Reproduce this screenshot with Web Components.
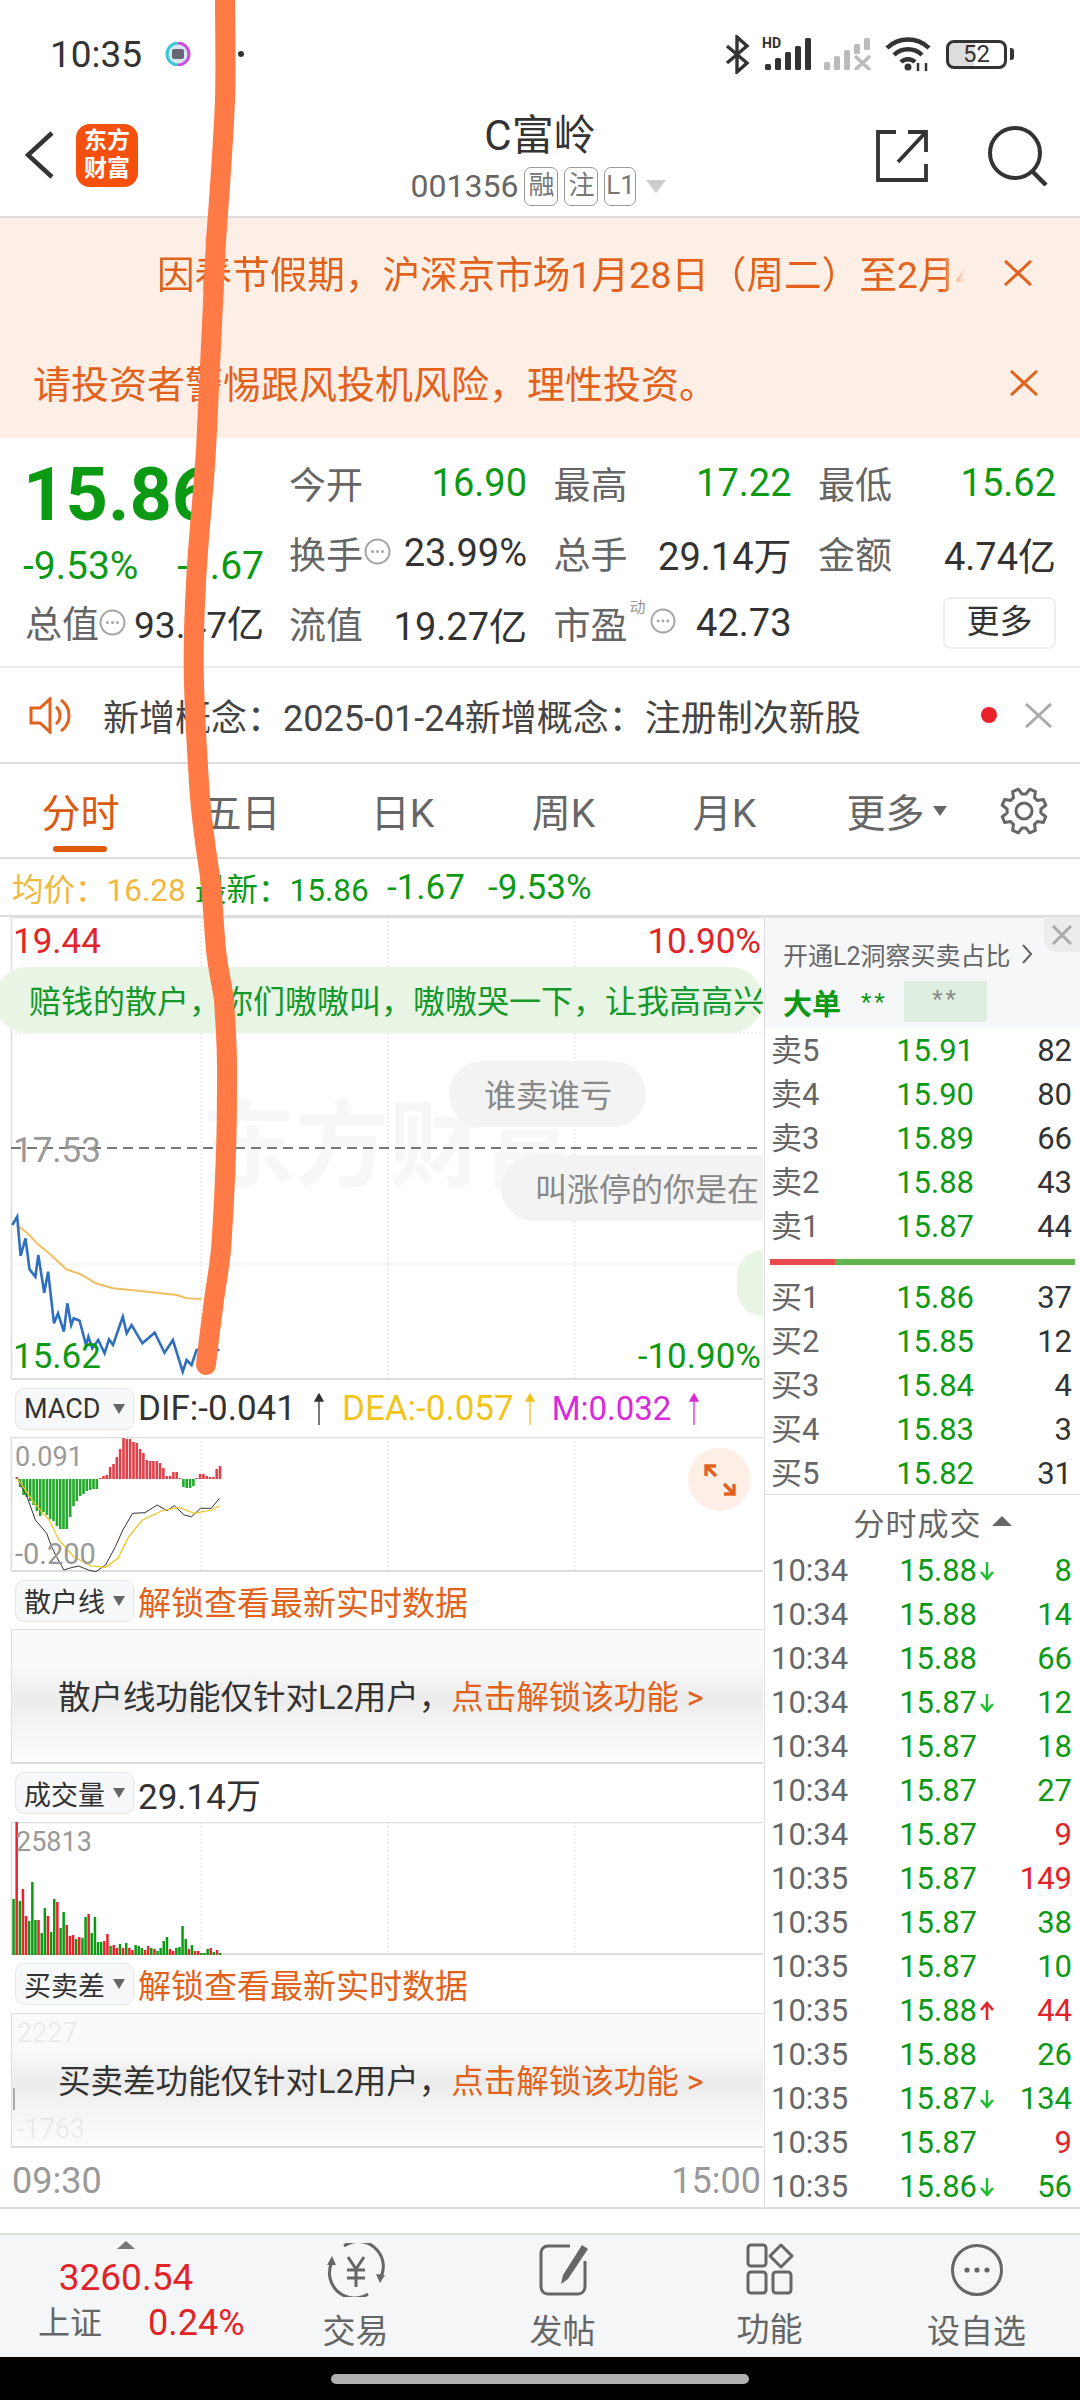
<!DOCTYPE html>
<html lang="zh"><head><meta charset="utf-8">
<style>
html,body{margin:0;padding:0;background:#fff}
body{width:1080px;height:2400px;overflow:hidden;position:relative;font-family:Roboto,"Noto Sans CJK SC",sans-serif;color:#333}
.page{display:flex;flex-direction:column;width:1080px;height:2400px}
.main{display:flex;height:1292px;border-bottom:2px solid #ddd;box-sizing:border-box}
.left{width:764px;display:flex;flex-direction:column;flex:none}
.gap{height:24px;flex:none}
.dif{color:#333;font-size:35px}.dea{color:#f0c419;font-size:35px}.m{color:#d92bd9;font-size:33px}.unlock{color:#e2621b}.plain{color:#333;font-size:35px}
x-up{margin-left:18px;margin-right:18px}
</style></head><body>
<div class="page">
<x-status></x-status>
<x-stockhead></x-stockhead>
<x-notice style="--indent:157px;--pad:48px;--end:966px;font-size:37.6px" fade>因春节假期，沪深京市场1月28日（周二）至2月4</x-notice>
<x-notice style="--indent:33px;--pad:42px;--end:1000px">请投资者警惕跟风投机风险，理性投资。</x-notice>
<x-quote></x-quote>
<x-news></x-news>
<x-tabs></x-tabs>
<x-infoline></x-infoline>
<div class="main">
 <div class="left">
  <x-pricechart></x-pricechart>
  <x-head label="MACD" h="57"><span class="dif">DIF:-0.041</span><x-up style="color:#333"></x-up><span class="dea">DEA:-0.057</span><x-up style="color:#f0c419;margin-left:11px;margin-right:17px"></x-up><span class="m">M:0.032</span><x-up style="color:#d92bd9;margin-right:0"></x-up></x-head>
  <x-macd></x-macd>
  <x-head label="散户线" h="57"><span class="unlock">解锁查看最新实时数据</span></x-head>
  <x-locked name="散户线"></x-locked>
  <x-head label="成交量" h="58"><span class="plain">29.14万</span></x-head>
  <x-volume></x-volume>
  <x-head label="买卖差" h="58"><span class="unlock">解锁查看最新实时数据</span></x-head>
  <x-locked name="买卖差" ghost></x-locked>
  <x-timeaxis></x-timeaxis>
 </div>
 <x-book></x-book>
</div>
<div class="gap"></div>
<x-nav></x-nav>
<x-gesture></x-gesture>
</div>
<x-stroke></x-stroke>
<script>
const mk=(name,css,html)=>customElements.define(name,class extends HTMLElement{
  connectedCallback(){ if(this.shadowRoot) return; const s=this.attachShadow({mode:'open'});
    s.innerHTML='<style>'+css+'</style>'+(typeof html==='function'?html(this):html);}
});
const GREEN='#0c9a14',RED='#e02428',GRAY='#666';
const infoIcon=(s=27)=>`<svg width="${s}" height="${s}" viewBox="0 0 27 27" style="flex:none"><circle cx="13.5" cy="13.5" r="12" fill="none" stroke="#a5a5a5" stroke-width="2"/><g fill="#a5a5a5"><circle cx="8.5" cy="13.5" r="1.5"/><circle cx="13.5" cy="13.5" r="1.5"/><circle cx="18.5" cy="13.5" r="1.5"/></g></svg>`;
const cross=(w,h,c,sw=3)=>`<svg width="${w}" height="${h}" viewBox="0 0 ${w} ${h}" style="flex:none"><path d="M1 1L${w-1} ${h-1}M${w-1} 1L1 ${h-1}" fill="none" stroke="${c}" stroke-width="${sw}"/></svg>`;

mk('x-status',`:host{display:flex;align-items:center;height:96px;padding:12px 66px 0 50px;box-sizing:border-box;flex:none;color:#333}
.t{font-size:37px;line-height:1;width:115px}.r{margin-left:auto;display:flex;align-items:center}
.hd{position:relative;width:50px;height:32px}.hd b{position:absolute;left:0;top:-2px;font-size:14px;line-height:14px;font-weight:700;color:#333}
.bat{width:61px;height:29px;border:3px solid #333;border-radius:8px;box-sizing:border-box;position:relative;font-size:24px;line-height:23px;text-align:center;background:linear-gradient(90deg,#ddd 45%,#fff 45%)}
.cap{width:4px;height:12px;background:#333;border-radius:0 3px 3px 0;margin-left:3px}`,
`<span class="t">10:35</span>
<svg width="26" height="24" viewBox="0 0 26 24"><circle cx="13" cy="12" r="11" fill="#d8e8f0"/><path d="M13 1a11 11 0 0 0 0 22" fill="none" stroke="#37c8d8" stroke-width="3"/><path d="M13 1a11 11 0 0 1 0 22" fill="none" stroke="#d04ce0" stroke-width="3"/><rect x="7" y="7" width="12" height="10" rx="2" fill="#667"/></svg>
<svg width="6" height="6" viewBox="0 0 6 6" style="margin-left:47px"><circle cx="3" cy="3" r="3" fill="#333"/></svg>
<div class="r">
<svg width="25" height="39" viewBox="0 0 25 39"><path d="M2 11L22 28L12 37V2L22 11L2 28" fill="none" stroke="#333" stroke-width="3.4"/></svg>
<div class="hd" style="margin-left:12px"><b>HD</b><svg width="50" height="32" viewBox="0 0 50 32" style="position:absolute;left:0;top:0"><g fill="#333"><rect x="3" y="26" width="6" height="6" rx="1.5"/><rect x="13" y="20" width="6" height="12" rx="1.5"/><rect x="23" y="14" width="6" height="18" rx="1.5"/><rect x="33" y="8" width="6" height="24" rx="1.5"/><rect x="43" y="0" width="6" height="32" rx="1.5"/></g></svg></div>
<svg width="48" height="32" viewBox="0 0 48 32" style="margin-left:12px"><g fill="#bbb"><rect x="0" y="24" width="6" height="8" rx="1.5"/><rect x="10" y="18" width="6" height="14" rx="1.5"/><rect x="20" y="12" width="6" height="20" rx="1.5"/><rect x="30" y="6" width="6" height="10" rx="1.5"/><rect x="40" y="0" width="6" height="12" rx="1.5"/></g><path d="M31 18L46 32M46 18L31 32" stroke="#bbb" stroke-width="3.5"/></svg>
<svg width="46" height="34" viewBox="0 0 46 34" style="margin-left:13px"><g fill="none" stroke="#333" stroke-width="4.5"><path d="M2 11a30 30 0 0 1 42 0"/><path d="M9 18a20 20 0 0 1 28 0"/><path d="M16 25a10 10 0 0 1 14 0"/></g><circle cx="23" cy="30" r="3.5" fill="#333"/><path d="M33 34v-8M41 26v8" stroke="#333" stroke-width="2.5"/></svg>
<div class="bat" style="margin-left:15px">52</div><div class="cap"></div>
</div>`);

mk('x-stockhead',`:host{display:grid;grid-template-columns:1fr auto 1fr;height:122px;box-sizing:border-box;border-bottom:2px solid #ddd;flex:none;background:#fff}
.l{display:flex;align-items:center;padding-left:25px;gap:22px;padding-bottom:2px}.logo{width:62px;height:63px;border-radius:14px;background:#f5500e;color:#fff;font-weight:700;font-size:23px;line-height:28px;text-align:center;padding-top:3px;box-sizing:border-box}
.c{display:flex;flex-direction:column;align-items:center}.name{font-size:42px;line-height:50px;margin-top:15px;color:#333}
.code{display:flex;align-items:center;font-size:32px;line-height:40px;color:#666;margin-top:5px;margin-left:-3px}
.bd{height:39px;border:1.5px solid #999;border-radius:7px;box-sizing:border-box;font-size:26px;line-height:35px;text-align:center;color:#777;margin-left:6px;width:34px}
.tri{width:0;height:0;border:10px solid transparent;border-top:13px solid #ccc;border-bottom:0;margin-left:10px}
.r{display:flex;align-items:center;justify-content:flex-end;padding-right:32px;gap:58px}`,
`<div class="l"><svg width="29" height="48" viewBox="0 0 29 48"><path d="M27 2L3 24L27 46" fill="none" stroke="#333" stroke-width="4.5"/></svg><div class="logo">东方<br>财富</div></div>
<div class="c"><div class="name">C富岭</div><div class="code">001356<span class="bd" style="margin-left:6px">融</span><span class="bd">注</span><span class="bd" style="width:32px">L1</span><span class="tri"></span></div></div>
<div class="r"><svg width="52" height="52" viewBox="0 0 52 52"><path d="M20 2H2V50H50V34M50 22V2H32M50 2L22 32" fill="none" stroke="#333" stroke-width="3.8"/></svg>
<svg width="62" height="60" viewBox="0 0 62 60"><circle cx="29" cy="27" r="25" fill="none" stroke="#333" stroke-width="4"/><path d="M46 45L60 59" stroke="#333" stroke-width="4.5"/></svg></div>`);

mk('x-notice',`:host{display:flex;align-items:center;height:110px;background:#fdeee6;flex:none;position:relative;padding-left:var(--indent);padding-right:var(--pad);box-sizing:border-box;color:#e2621b;font-size:38px}
.w{width:calc(var(--end) - var(--indent));overflow:hidden;white-space:nowrap;line-height:50px;padding-top:3px}
:host([fade]) .w{-webkit-mask-image:linear-gradient(90deg,#000 97%,transparent);mask-image:linear-gradient(90deg,#000 97%,transparent)}
svg{margin-left:auto}`,()=>`<div class="w"><slot></slot></div>${cross(28,26,'#e2621b',3)}`);

mk('x-quote',`:host{display:flex;height:230px;box-sizing:border-box;border-bottom:2px solid #ececec;padding:10px 24px 0 23px;flex:none;background:#fff}
.lf{width:241px;margin-right:25px;flex:none}.big{height:94px;font-size:74px;font-weight:700;line-height:94px;color:${GREEN}}
.chg{height:46px;display:flex;justify-content:space-between;color:${GREEN};font-size:39px;line-height:48px}
.tot{height:68px;display:flex;align-items:center;color:${GRAY};font-size:37px;padding-left:2px}.tot b{margin-left:auto;font-weight:400;color:#333;font-size:37px}
.g{display:grid;grid-template-columns:238px 238px 238px;column-gap:26.5px;grid-auto-rows:70px;flex:none}
.c{display:flex;align-items:center;font-size:37px;color:${GRAY};white-space:nowrap;position:relative}.c b{font-weight:400;margin-left:auto;font-size:38px;color:#333}.c b.gr{color:${GREEN}}
.c svg{margin-left:1px;margin-top:-4px}.sup{font-size:16px;position:absolute;left:76px;top:6px;color:#999}
.more{margin-left:auto;width:113px;height:52px;border:2px solid #eee;border-radius:7px;box-sizing:border-box;font-size:33px;line-height:46px;text-align:center;color:#333}`,
`<div class="lf"><div class="big">15.86</div><div class="chg"><span>-9.53%</span><span>-1.67</span></div><div class="tot">总值${infoIcon()}<b>93.47亿</b></div></div>
<div class="g">
<div class="c">今开<b class="gr">16.90</b></div><div class="c">最高<b class="gr">17.22</b></div><div class="c">最低<b class="gr">15.62</b></div>
<div class="c">换手${infoIcon()}<b>23.99%</b></div><div class="c">总手<b>29.14万</b></div><div class="c">金额<b>4.74亿</b></div>
<div class="c">流值<b>19.27亿</b></div><div class="c">市盈<span class="sup">动</span><span style="width:21px"></span>${infoIcon(26)}<b>42.73</b></div><div class="c"><span class="more">更多</span></div>
</div>`);

mk('x-news',`:host{display:flex;align-items:center;height:96px;box-sizing:border-box;border-bottom:2px solid #ddd;padding:0 28px 0 29px;flex:none;color:#444;font-size:36px}
span{margin-left:29px;white-space:nowrap}.d{width:16px;height:16px;border-radius:50%;background:#e8202a;margin-left:auto}`,
`<svg width="45" height="37" viewBox="0 0 45 37" style="flex:none"><g fill="none" stroke="#e2621b" stroke-width="3"><path d="M2 11H11L21 2V35L11 26H2Z"/><path d="M27 10a11 11 0 0 1 0 17"/><path d="M32 3a19 19 0 0 1 0 31"/></g></svg>
<span>新增概念：2025-01-24新增概念：注册制次新股</span><i class="d"></i><div style="margin-left:28px;display:flex">${cross(27,25,'#aaa',3)}</div>`);

mk('x-tabs',`:host{display:flex;height:95px;box-sizing:border-box;border-bottom:2px solid #ddd;flex:none;font-size:39px;color:${GRAY}}
.t{width:161px;display:flex;align-items:center;justify-content:center;position:relative;padding-bottom:2px;box-sizing:border-box}
.a{color:#d9590f}.a::after{content:"";position:absolute;left:53px;width:54px;height:6px;bottom:5px;border-radius:3px;background:#e05a0c}
.tri{position:absolute;left:128px;top:42px;border:7px solid transparent;border-top:10px solid #666;border-bottom:0}
svg{margin-left:34px;margin-top:23px;flex:none}`,
()=>{let p='';for(let i=0;i<8;i++){const a=i*Math.PI/4-Math.PI/8,d=Math.PI/8;
 const P=(r,t)=>(24+r*Math.cos(t)).toFixed(1)+' '+(24+r*Math.sin(t)).toFixed(1);
 p+=(i?'L':'M')+P(17,a-d*.7)+'L'+P(22.5,a-d*.35)+'L'+P(22.5,a+d*.35)+'L'+P(17,a+d*.7);}
 return `<div class="t a">分时</div><div class="t">五日</div><div class="t">日K</div><div class="t">周K</div><div class="t">月K</div><div class="t">更多<i class="tri"></i></div>
 <svg width="48" height="48" viewBox="0 0 48 48"><path d="${p}Z" fill="none" stroke="#666" stroke-width="3" stroke-linejoin="round"/><circle cx="24" cy="24" r="8" fill="none" stroke="#666" stroke-width="3"/></svg>`;});

mk('x-infoline',`:host{display:flex;align-items:center;height:58px;box-sizing:border-box;border-bottom:2px solid #ddd;padding-left:12px;flex:none;font-size:31.5px;color:${GREEN};white-space:nowrap}
.y{color:#f0b840;width:183px}.n{width:192px}.a{width:101px;font-size:35px}.b{font-size:35px}`,
`<span class="y">均价：16.28</span><span class="n">最新：15.86</span><span class="a">-1.67</span><span class="b">-9.53%</span>`);

/* chart helpers, all coordinates read from the reference */
const grid=(top,bot,extra='')=>`<g stroke="#ddd" stroke-width="1" stroke-dasharray="2 2">${[201,388,575].map(x=>`<line x1="${x}" x2="${x}" y1="${top}" y2="${bot}"/>`).join('')}${extra}</g>
<line x1="11.5" x2="11.5" y1="${top}" y2="${bot}" stroke="#ddd" stroke-width="1.5"/><line x1="11" x2="763" y1="${top+.5}" y2="${top+.5}" stroke="#ddd" stroke-width="1.5"/><line x1="11" x2="763" y1="${bot-1}" y2="${bot-1}" stroke="#ddd" stroke-width="2"/>`;
const zp=(a,oy)=>a.map(([x,y])=>(x/2.036).toFixed(1)+','+(y/3+oy).toFixed(1)).join(' ');

mk('x-pricechart',`:host{display:block;height:463px;position:relative;overflow:hidden;flex:none}
svg{position:absolute;left:0;top:0}
.l{position:absolute;font-size:35px;line-height:40px;white-space:nowrap}
.bub{position:absolute;height:66px;border-radius:33px;font-size:32px;line-height:70px;white-space:nowrap;overflow:hidden;box-sizing:border-box}
.wm{position:absolute;left:201px;top:180px;font-size:94px;line-height:100px;font-weight:700;color:#f7f7f7;white-space:nowrap}`,
()=>{const blue=[[25,975],[35,950],[42,1068],[52,1015],[60,1108],[72,1130],[78,1065],[90,1178],[98,1115],[110,1270],[118,1240],[130,1295],[137,1210],[145,1275],[150,1255],[162,1262],[175,1335],[180,1310],[188,1345],[200,1320],[213,1360],[222,1318],[230,1335],[250,1250],[258,1300],[268,1275],[290,1330],[315,1298],[335,1358],[352,1320],[372,1415],[380,1380],[390,1395],[400,1350],[447,1350]];
const yel=[[35,975],[60,1005],[75,1030],[100,1060],[135,1108],[165,1123],[195,1150],[230,1165],[300,1175],[360,1185],[380,1195],[410,1197]];
return `<div class="wm">东方财富</div>
<svg width="764" height="463" viewBox="0 917 764 463">${grid(917,1380,'<line x1="11" x2="763" y1="1033" y2="1033"/><line x1="11" x2="763" y1="1264" y2="1264"/>')}
<line x1="11" x2="763" y1="1148" y2="1148" stroke="#777" stroke-width="2" stroke-dasharray="10 6"/>
<polyline points="${zp(yel,900)}" fill="none" stroke="#f0c060" stroke-width="2"/><polyline points="${zp(blue,900)}" fill="none" stroke="#2f6fbd" stroke-width="2.6"/></svg>
<div class="l" style="left:13px;top:5px;color:${RED}">19.44</div><div class="l" style="right:3px;top:5px;color:${RED}">10.90%</div>
<div class="l" style="left:13px;top:214px;color:#999">17.53</div>
<div class="l" style="left:13px;top:420px;color:${GREEN}">15.62</div><div class="l" style="right:3px;top:420px;color:${GREEN}">-10.90%</div>
<div class="bub" style="left:-6px;width:769px;top:50px;background:#e8f5e5;color:#14982a;padding-left:35px">赔钱的散户，你们嗷嗷叫，嗷嗷哭一下，让我高高兴</div>
<div class="bub" style="left:449px;width:197px;top:144px;background:#f3f3f3;color:#888;padding-left:35px">谁卖谁亏</div>
<div class="bub" style="left:501px;width:262px;top:238px;background:#f3f3f3;color:#888;padding-left:34px;border-radius:33px 0 0 33px">叫涨停的你是在</div>
<div class="bub" style="left:737px;width:26px;top:333px;background:#e8f5e5;border-radius:33px 0 0 33px"></div>`;});

mk('x-up',`:host{display:inline-flex;align-items:center}`,`<svg width="10" height="32" viewBox="0 0 10 32"><path d="M5 32V1M1 8L5 1L9 8Z" fill="currentColor" stroke="currentColor" stroke-width="1.3"/></svg>`);

mk('x-head',`:host{display:flex;align-items:center;padding-left:15px;box-sizing:border-box;flex:none;font-size:33px;white-space:nowrap}
.b{width:119px;height:42px;box-sizing:border-box;border:1.5px solid #e6e6e6;border-radius:9px;background:#f7f8fa;display:flex;align-items:center;padding-left:8px;font-size:27px;margin-right:4px;color:#333;position:relative;flex:none}
.b::after{content:"";position:absolute;left:97px;top:15px;border:6.5px solid transparent;border-top:10px solid #666;border-bottom:0}`,
h=>{h.style.height=h.getAttribute('h')+'px';return `<div class="b">${h.getAttribute('label')}</div><slot></slot>`;});

mk('x-macd',`:host{display:block;height:135px;position:relative;overflow:hidden;flex:none}svg{position:absolute;left:0;top:0}
.l{position:absolute;left:15px;font-size:27px;line-height:32px;color:#999}
.e{position:absolute;left:688px;top:11px;width:63px;height:63px;border-radius:50%;background:#fdeee6;display:flex;align-items:center;justify-content:center}`,
()=>{const v=[2,-8,-16,-18,-22,-26,-32,-37,-33,-36,-40,-42,-47,-50,-50,-50,-38,-27,-22,-17,-15,-12,-11,-10,-10,1,3,4,12,15,22,30,41,40,40,37,36,30,26,19,18,18,18,16,11,3,3,7,7,1,-8,-9,-9,-7,1,5,5,3,2,2,10,13];
let r='';v.forEach((h,i)=>{const x=(15.6+3.33*i).toFixed(1);r+=`<rect x="${x}" width="2.6" y="${h>0?1479-h:1479}" height="${Math.abs(h)}" fill="${h>0?'#e0404a':'#22a82a'}"/>`;});
const dif=[[35,295],[55,350],[72,420],[95,460],[105,500],[115,530],[130,570],[145,563],[160,558],[180,570],[195,575],[215,555],[235,500],[250,450],[270,400],[295,398],[320,375],[340,392],[355,377],[375,405],[390,410],[408,385],[430,385],[447,355]];
const dea=[[35,295],[70,370],[100,420],[120,480],[150,530],[185,558],[215,562],[240,535],[262,470],[290,420],[330,392],[365,382],[395,400],[430,390],[447,378]];
return `<svg width="764" height="135" viewBox="0 1437 764 135">${grid(1437,1572)}${r}<polyline points="${zp(dif,1380)}" fill="none" stroke="#333" stroke-width="1"/><polyline points="${zp(dea,1380)}" fill="none" stroke="#f0c419" stroke-width="1.2"/></svg>
<div class="l" style="top:4px">0.091</div><div class="l" style="top:101px;font-size:29px">-0.200</div>
<div class="e"><svg style="position:static" width="32" height="32" viewBox="0 0 32 32"><path d="M2 12V2H12M2 2L12 12M30 20V30H20M30 30L20 20" fill="none" stroke="#e2621b" stroke-width="3.4"/></svg></div>`;});

mk('x-locked',`:host{display:block;height:135px;position:relative;box-sizing:border-box;flex:none;margin-left:11px;width:752px;border:solid #ddd;border-width:1.5px 0 2px 1.5px;overflow:hidden;background:linear-gradient(#fafafa 0,#f9f9f9 28%,#ececec 52%,#f3f3f3 68%,#fcfcfc 100%)}
.t{position:absolute;left:46px;top:50px;font-size:32.5px;line-height:36px;color:#333;white-space:nowrap}.t b{font-weight:400;color:#e2621b}
.g{position:absolute;left:5px;font-size:27px;line-height:30px;color:#999;opacity:.14}.k{position:absolute;left:1px;top:74px;width:2px;height:22px;background:#aaa}`,
h=>`${h.hasAttribute('ghost')?'<div class="g" style="top:4px">2227</div><div class="g" style="top:100px">-1763</div><i class="k"></i>':''}<div class="t">${h.getAttribute('name')}功能仅针对L2用户，<b>点击解锁该功能 &gt;</b></div>`);

mk('x-volume',`:host{display:block;height:133px;position:relative;flex:none;overflow:hidden}svg{position:absolute;left:0;top:0}
.l{position:absolute;left:16px;top:4px;font-size:27px;line-height:32px;color:#999}`,
()=>{const d='g56 r133 g54 r66 r39 g34 g73 g35 r35 g22 g47 r39 g23 g56 r53 g27 g43 r30 r19 r20 g16 r18 g17 g38 r41 g22 g38 g13 g13 r14 r21 g9 r10 r7 g11 r7 g12 r7 r5 g10 g9 g7 r5 r9 g7 r6 g4 g7 g14 g18 r6 r4 g7 g8 g29 g16 r6 g10 r4 r4 g2 g2 g6 r7 g3 r5 g2'.split(' ');
let r='';d.forEach((s,i)=>{const h=+s.slice(1),x=(12.3+3.13*i).toFixed(1);r+=`<rect x="${x}" width="2.5" y="${1955-h}" height="${h}" fill="${s[0]=='r'?'#e8222c':'#0c9a14'}"/>`;});
return `<svg width="764" height="133" viewBox="0 1822 764 133">${grid(1822,1955)}${r}</svg><div class="l">25813</div>`;});

mk('x-timeaxis',`:host{display:flex;justify-content:space-between;align-items:center;height:59px;padding:6px 3px 0 12px;box-sizing:border-box;flex:none;font-size:36px;color:#999}`,`<span>09:30</span><span>15:00</span>`);

mk('x-book',`:host{display:block;width:316px;flex:none;border-left:1.5px solid #ddd;box-sizing:border-box;color:#333;font-size:31px;white-space:nowrap;position:relative}
.hd{height:110px;background:#f6f7f9;padding:9px 0 0 18px;box-sizing:border-box;border-top:1.5px solid #e2e2e2}
.ti{height:54px;display:flex;align-items:center;font-size:25px;color:#666}.ti svg{margin-left:11px}
.big{display:flex;align-items:center;height:41px;color:${GREEN}}.big b{font-size:29px;width:78px}.big i{font-style:normal;font-size:24px;line-height:30px;width:43px;letter-spacing:3px}
.box{width:83px;height:41px;background:#dfeee0;text-align:center;color:#888;font-size:24px;line-height:36px;letter-spacing:3px}
.x{position:absolute;right:0;top:0;width:36px;height:35px;background:#ececec;border-radius:0 0 0 14px;display:flex;align-items:center;justify-content:center}
.r{display:grid;grid-template-columns:99px 104px 98px;padding-left:6px;height:44px;line-height:48px}
.r span:nth-child(1){color:${GRAY};font-size:31px}.r span:nth-child(2){color:${GREEN};text-align:right}.r span:nth-child(3){text-align:right}
.bar{height:27px;display:flex;align-items:center;padding:3px 5px 0 5px;box-sizing:border-box}.bar i{height:6px;display:block}
.sep{height:53px;border-top:1.5px solid #ddd;box-sizing:border-box;display:flex;align-items:center;justify-content:center;font-size:31px;color:${GRAY};letter-spacing:1px;padding-left:20px}
.up{width:0;height:0;border:10px solid transparent;border-bottom:10px solid #666;border-top:0;margin-left:10px}
.k{display:grid;grid-template-columns:99px 107px 17px 78px;padding-left:6px;height:44px;line-height:48px;align-items:center}
.k span:nth-child(1){color:${GRAY}}.k span:nth-child(2){color:${GREEN};text-align:right}.k span:nth-child(4){text-align:right}
.k svg{margin-left:3px;display:block}`,
()=>{const sell=[['卖5','15.91','82'],['卖4','15.90','80'],['卖3','15.89','66'],['卖2','15.88','43'],['卖1','15.87','44']];
const buy=[['买1','15.86','37'],['买2','15.85','12'],['买3','15.84','4'],['买4','15.83','3'],['买5','15.82','31']];
const row=a=>`<div class="r"><span>${a[0]}</span><span>${a[1]}</span><span>${a[2]}</span></div>`;
const dn=`<svg width="14" height="20" viewBox="0 0 14 20"><path d="M7 1V18M1 11L7 18L13 11" fill="none" stroke="#18c02a" stroke-width="2.4"/></svg>`;
const up=`<svg width="14" height="20" viewBox="0 0 14 20"><path d="M7 19V2M1 9L7 2L13 9" fill="none" stroke="${RED}" stroke-width="2.6"/></svg>`;
const T=[['10:34','15.88',dn,'8',0],['10:34','15.88','','14',0],['10:34','15.88','','66',0],['10:34','15.87',dn,'12',0],['10:34','15.87','','18',0],['10:34','15.87','','27',0],['10:34','15.87','','9',1],['10:35','15.87','','149',1],['10:35','15.87','','38',0],['10:35','15.87','','10',0],['10:35','15.88',up,'44',1],['10:35','15.88','','26',0],['10:35','15.87',dn,'134',0],['10:35','15.87','','9',1],['10:35','15.86',dn,'56',0]];
return `<div class="hd"><div class="ti">开通L2洞察买卖占比<svg width="10" height="20" viewBox="0 0 10 20"><path d="M1 1L9 10L1 19" fill="none" stroke="#666" stroke-width="2"/></svg></div>
<div class="big"><b>大单</b><i>**</i><div class="box">**</div></div></div>
<div class="x">${cross(20,20,'#aaa',3)}</div>
${sell.map(row).join('')}<div class="bar"><i style="width:65px;background:#e84a4f"></i><i style="flex:1;background:#62b54e"></i></div>${buy.map(row).join('')}
<div class="sep">分时成交<i class="up"></i></div>
${T.map(t=>`<div class="k"><span>${t[0]}</span><span>${t[1]}</span><span>${t[2]}</span><span style="color:${t[4]?RED:GREEN}">${t[3]}</span></div>`).join('')}`;});

mk('x-nav',`:host{display:grid;grid-template-columns:252px repeat(4,207px);height:124px;background:#f5f6f8;border-top:2px solid #ddd;box-sizing:border-box;flex:none;color:${GRAY}}
.i{display:flex;flex-direction:column;align-items:center;font-size:33px;padding-top:8px;box-sizing:border-box}.i span{line-height:38px;margin-top:16px}
.m{position:relative;display:flex;flex-direction:column;padding-top:6px;box-sizing:border-box}
.tri{align-self:center;border:9.5px solid transparent;border-bottom:8px solid #777;border-top:0}
.v{align-self:center;font-size:37px;line-height:42px;color:${RED};margin-top:8px}
.b{display:flex;padding-left:38px;margin-top:3px;font-size:32px;line-height:42px}.b em{font-style:normal;color:${RED};margin-left:46px;font-size:36px}`,
`<div class="m"><i class="tri"></i><div class="v">3260.54</div><div class="b">上证<em>0.24%</em></div></div>
<div class="i"><svg width="60" height="54" viewBox="0 0 60 54"><g fill="none" stroke="#666" stroke-width="3"><path d="M18 3a25 25 0 0 1 37 31"/><path d="M42 51a25 25 0 0 1-36-32"/><path d="M22 14L30 26L38 14M21 27H39M21 35H39M30 26V44"/></g><path d="M6 13L1 22L10 22Z M54 40L50 31L59 32Z" fill="#666"/></svg><span>交易</span></div>
<div class="i"><svg width="50" height="54" viewBox="0 0 50 54"><path d="M32 3H10a7 7 0 0 0-7 7V44a7 7 0 0 0 7 7H40a7 7 0 0 0 7-7V18" fill="none" stroke="#666" stroke-width="3"/><path d="M44 2L50 6L30 36L23 41L25 32Z" fill="#666"/></svg><span>发帖</span></div>
<div class="i"><svg width="48" height="52" viewBox="0 0 48 52"><g fill="none" stroke="#666" stroke-width="3"><rect x="2" y="2" width="18" height="21" rx="3"/><path d="M35 2L46 13L35 24L24 13Z" stroke-linejoin="round"/><rect x="2" y="29" width="18" height="21" rx="3"/><rect x="27" y="29" width="18" height="21" rx="3"/></g></svg><span>功能</span></div>
<div class="i"><svg width="52" height="54" viewBox="0 0 52 54"><circle cx="26" cy="27" r="24.5" fill="none" stroke="#666" stroke-width="3"/><g fill="#666"><circle cx="16" cy="27" r="2.6"/><circle cx="26" cy="27" r="2.6"/><circle cx="36" cy="27" r="2.6"/></g></svg><span>设自选</span></div>`);

mk('x-gesture',`:host{display:flex;justify-content:center;align-items:flex-start;height:44px;background:#000;flex:none;padding-top:17px;box-sizing:border-box}i{width:418px;height:10px;border-radius:5px;background:#b0b0b0}`,`<i></i>`);

mk('x-stroke',`:host{position:absolute;left:0;top:0;width:1080px;height:2400px;pointer-events:none}`,
`<svg width="1080" height="2400" viewBox="0 0 1080 2400" style="display:block"><path d="M225 -20C225 40 226 70 225 100C223 150 219 200 216 240C212 320 209 390 206 450C203 500 198 540 196 583C194 620 193 650 194 683C195 720 197 750 199 783C201 820 206 850 211 883C213 905 214 930 216 950C219 975 222 985 224 1000C226 1030 227 1050 227 1067C227 1100 227 1130 226 1150C225 1190 223 1220 221 1250C219 1270 216 1285 214 1300C211 1325 208 1345 206 1365" fill="none" stroke="#ff7a45" stroke-width="20" stroke-linecap="round" stroke-linejoin="round"/></svg>`);
</script>
</body></html>
